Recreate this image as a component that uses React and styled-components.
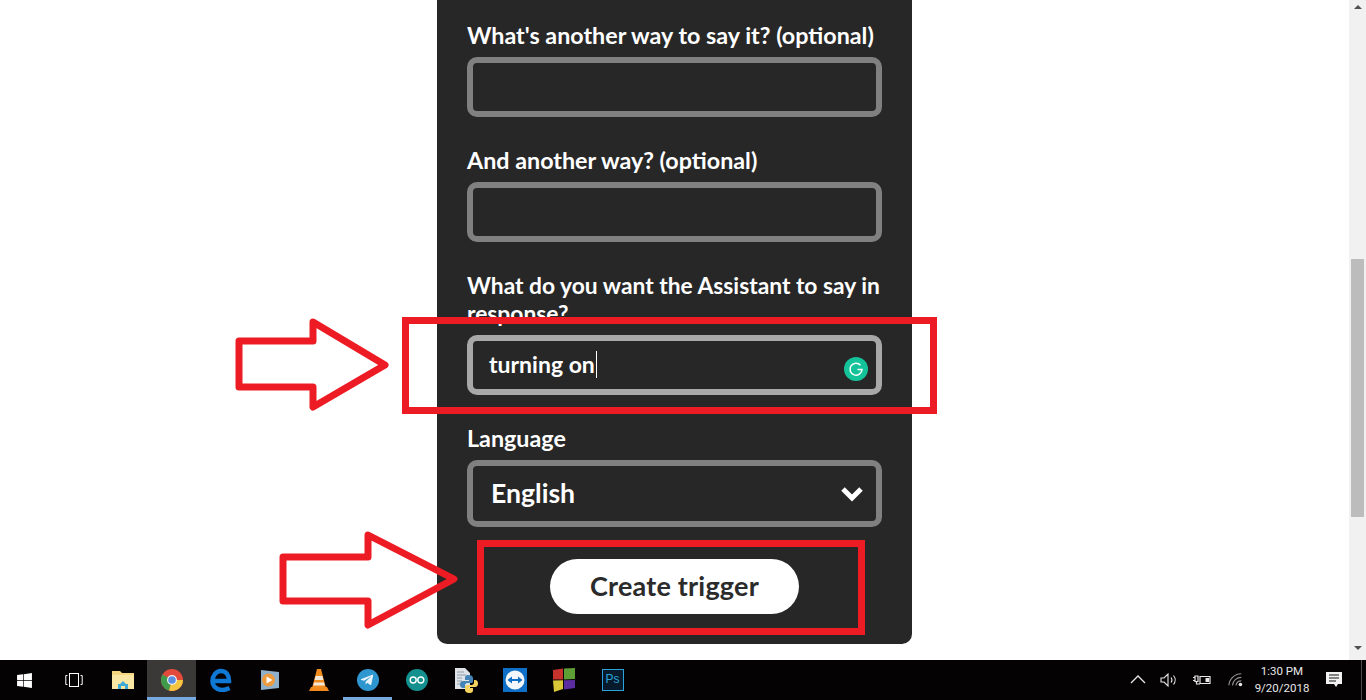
import React from 'react';
import styled, { createGlobalStyle } from 'styled-components';
import { FaWindows, FaTelegramPlane } from 'react-icons/fa';

const GlobalStyle = createGlobalStyle`
  html, body {
    margin: 0;
    padding: 0;
    height: 700px;
    overflow: hidden;
    background: #fff;
    font-family: 'Lato', 'Liberation Sans', sans-serif;
  }
`;

// Styles
const Screen = styled.div`
  display: flex;
  flex-direction: column;
  width: 1366px;
  height: 700px;
`;

const Browser = styled.div`
  display: flex;
  height: 660px;
`;

const Page = styled.main`
  position: relative;
  flex: 1;
  display: flex;
  justify-content: center;
  align-items: flex-start;
`;

const Panel = styled.form`
  width: 475px;
  box-sizing: border-box;
  padding: 21px 30px 30px;
  background: #272727;
  border-radius: 0 0 10px 10px;
  display: flex;
  flex-direction: column;
`;

const Label = styled.label`
  display: block;
  font-size: ${p => (p.$long ? 22.8 : 23.3)}px;
  line-height: 28px;
  font-weight: 700;
  color: #fff;
  margin-bottom: 8px;
`;

const Field = styled.div`
  box-sizing: border-box;
  height: ${p => (p.$tall ? 67 : 60)}px;
  border: 6px solid ${p => (p.$focus ? '#a8a8a8' : '#808080')};
  border-radius: 10px;
  margin-bottom: ${p => (p.$tall ? 32 : 29)}px;
  display: flex;
  align-items: center;
  justify-content: space-between;
  color: #fff;
  font-weight: 700;
`;

const TypedText = styled.span`
  font-size: 23px;
  line-height: 27px;
  margin-left: 16px;
  margin-bottom: 2px;
  padding-right: 1px;
  border-right: 1px solid #fff;
`;

const SelectText = styled.span`
  font-size: 26.6px;
  margin-left: 18px;
  margin-bottom: 2px;
`;

const Chevron = styled.svg`
  width: 24px;
  height: 16px;
  margin-right: 12px;
`;

const GrammarlyBadge = styled.svg`
  width: 24px;
  height: 24px;
  margin: 8px 8px 0 0;
`;

const CreateButton = styled.button`
  align-self: center;
  width: 249px;
  height: 55px;
  border: 0;
  border-radius: 28px;
  padding: 0 0 2px;
  background: #fff;
  color: #2b2b2b;
  font-family: inherit;
  font-size: 27px;
  font-weight: 700;
  letter-spacing: 0.2px;
`;

const RedBox = styled.div`
  position: absolute;
  left: ${p => p.$left}px;
  top: ${p => p.$top}px;
  width: ${p => p.$width}px;
  height: ${p => p.$height}px;
  box-sizing: border-box;
  border: ${p => p.$border}px solid #ed1c24;
`;

const Arrow = styled.svg`
  position: absolute;
  left: ${p => p.$left}px;
  top: ${p => p.$top}px;
`;

const Scrollbar = styled.div`
  width: 17px;
  background: #f1f1f1;
  display: flex;
  flex-direction: column;
  align-items: center;
`;

const ScrollArrow = styled.div`
  width: 0;
  height: 0;
  border-left: 4px solid transparent;
  border-right: 4px solid transparent;
  ${p => (p.$down ? 'border-top: 4px solid #505050;' : 'border-bottom: 4px solid #505050;')}
  margin-top: ${p => (p.$down ? 129 : 5)}px;
`;

const Thumb = styled.div`
  width: 13px;
  height: 258px;
  margin-top: 250px;
  background: #bcbcbc;
`;

const Taskbar = styled.footer`
  height: 40px;
  background: #050204;
  display: flex;
  align-items: stretch;
`;

const Slot = styled.div`
  width: 49px;
  box-sizing: border-box;
  flex: none;
  display: flex;
  align-items: center;
  justify-content: center;
  background: ${p => (p.$active ? '#3b3838' : 'transparent')};
  border-bottom: 3px solid ${p => (p.$active || p.$open ? '#76a9e0' : 'transparent')};
  border-top: 3px solid transparent;
`;

const Tray = styled.div`
  margin-left: auto;
  display: flex;
  align-items: center;
  color: #e8e8e8;
`;

const TrayIcon = styled.svg`
  width: ${p => p.$size || 18}px;
  height: 18px;
  margin-right: ${p => p.$gap}px;
`;

const Clock = styled.div`
  width: 58px;
  margin-right: 14px;
  text-align: center;
  font-family: 'Roboto', 'Liberation Sans', sans-serif;
  font-size: 11.5px;
  line-height: 17px;
  color: #e8e8e8;
`;

const PsTile = styled.div`
  box-sizing: border-box;
  width: 22px;
  height: 22px;
  border: 1.5px solid #2aa3dc;
  background: #061a2b;
  color: #2aa3dc;
  font-family: 'Liberation Sans', sans-serif;
  font-size: 12px;
  line-height: 19px;
  text-align: center;
`;

const ShowDesktop = styled.div`
  width: 1px;
  height: 40px;
  margin-left: 18px;
  margin-right: 4px;
  background: #4a4a4a;
`;

const TelegramDisc = styled.div`
  width: 22px;
  height: 22px;
  border-radius: 50%;
  background: #2f97cf;
  display: flex;
  align-items: center;
  justify-content: center;
  padding-right: 1px;
  box-sizing: border-box;
`;

// Drawn icons
const TaskView = () => (
  <svg width="18" height="16" viewBox="0 0 18 16" fill="none" stroke="#fff" strokeWidth="1">
    <rect x="4.5" y="1.5" width="9" height="13" />
    <path d="M2.5 3.5H.8v9h1.7M15.5 3.5h1.7v9h-1.7" />
  </svg>
);

const Folder = () => (
  <svg width="22" height="20" viewBox="0 0 22 20">
    <path d="M0 1h8l2 2h12v16H0z" fill="#f6d77f" />
    <rect x="0" y="5" width="22" height="14" fill="#fbe7a3" />
    <path d="M6 19v-5h2l3-3 3 3h2v5h-3v-3H9v3z" fill="#3fa9d6" />
  </svg>
);

const Chrome = () => (
  <svg width="22" height="22" viewBox="0 0 22 22">
    <circle cx="11" cy="11" r="11" fill="#e24a3b" />
    <path d="M11 11 1.5 5.5A11 11 0 0 0 8 21.6z" fill="#3f9b4a" />
    <path d="M11 11h11a11 11 0 0 1-14 10.6z" fill="#f4c63f" />
    <circle cx="11" cy="11" r="5" fill="#f2f2f2" />
    <circle cx="11" cy="11" r="3.8" fill="#5b8fe0" />
  </svg>
);

const Edge = () => (
  <svg width="22" height="24" viewBox="0 0 22 24" fill="none">
    <path d="M4 13h15c0-6-3-10-8-10S2.500 8 2.500 13s4 9 10 9c3 0 5-1 7-2" stroke="#0f78d4" strokeWidth="4.500" />
  </svg>
);

const MediaPlayer = () => (
  <svg width="20" height="22" viewBox="0 0 20 22">
    <path d="M1 1l18 2v16L1 21z" fill="#8fb0c8" />
    <circle cx="8.500" cy="11" r="6.500" fill="#ef9a3c" />
    <path d="M6.500 7.500l6 3.500-6 3.500z" fill="#fff" />
  </svg>
);

const Vlc = () => (
  <svg width="20" height="24" viewBox="0 0 20 24">
    <path d="M2 19h16l2 4H0z" fill="#f08a1d" />
    <path d="M8 1h4l5 19H3z" fill="#f28c1e" />
    <path d="M6.600 8h6.800l1 4H5.600zM5 14.500h10l.8 3H4.200z" fill="#f2e8da" />
  </svg>
);

const Arduino = () => (
  <svg width="22" height="22" viewBox="0 0 22 22" fill="none">
    <circle cx="11" cy="11" r="11" fill="#14908e" />
    <circle cx="7.200" cy="11" r="3" stroke="#fff" strokeWidth="1.400" />
    <circle cx="14.800" cy="11" r="3" stroke="#fff" strokeWidth="1.400" />
  </svg>
);

const PythonFile = () => (
  <svg width="24" height="26" viewBox="0 0 24 26">
    <path d="M1 1h10l5 5v16H1z" fill="#dfe3e8" />
    <path d="M3 5h7M3 8h9M3 11h5M3 14h5M3 17h4" stroke="#8d99a6" strokeWidth="1" />
    <svg x="6" y="8" width="18" height="18" viewBox="0 0 18 18">
      <path d="M9 0C5 0 5 2 5 3v2h4v1H3C1 6 0 7.500 0 9.500S1 13 3 13h2v-2.500C5 9 6 8 7.500 8h4C13 8 13 7 13 6V3c0-2-2-3-4-3z" fill="#4584b6" />
      <path d="M9 18c4 0 4-2 4-3v-2H9v-1h6c2 0 3-1.500 3-3.500S17 5 15 5h-1v2.500C14 9 13 10 11.500 10h-4C6 10 5 11 5 12v3c0 2 2 3 4 3z" fill="#f4d35e" />
    </svg>
  </svg>
);

const TeamViewer = () => (
  <svg width="24" height="24" viewBox="0 0 24 24">
    <rect width="24" height="24" fill="#0f6fc6" />
    <circle cx="12" cy="12" r="9.500" fill="#f3f7fb" />
    <path d="M4.500 12l4.500-3.500V11h6V8.500l4.500 3.500-4.500 3.500V13H9v2.500z" fill="#0f6fc6" />
  </svg>
);

const Tiles = () => (
  <svg width="22" height="24" viewBox="0 0 22 24">
    <path d="M0 2l10-1.500v11L0 11.500z" fill="#c8322c" />
    <path d="M11 .5L22 0v11l-11 .5z" fill="#5d9e35" />
    <path d="M0 12.500l10-.2V21L1 24z" fill="#d8c736" />
    <path d="M11 12.300l11-.3v8l-11 1.500z" fill="#5a2ca0" />
  </svg>
);

// Data
const fields = [
  { label: "What's another way to say it? (optional)" },
  { label: 'And another way? (optional)' }
];

const App = () => (
  <Screen>
    <GlobalStyle />
    <Browser>
      <Page>
        <Panel>
          {fields.map(({ label }) => (
            <div key={label}>
              <Label>{label}</Label>
              <Field />
            </div>
          ))}
          <Label $long>What do you want the Assistant to say in response?</Label>
          <Field $focus>
            <TypedText>turning on</TypedText>
            <GrammarlyBadge viewBox="0 0 24 24" fill="none">
              <circle cx="12" cy="12" r="12" fill="#15c39a" />
              <path d="M16.500 8.200A6 6 0 1 0 18 12.500h-4.500" stroke="#fff" strokeWidth="1.500" />
            </GrammarlyBadge>
          </Field>
          <Label>Language</Label>
          <Field $tall>
            <SelectText>English</SelectText>
            <Chevron viewBox="0 0 24 16" fill="none">
              <path d="M3 3l9 9 9-9" stroke="#fff" strokeWidth="5" />
            </Chevron>
          </Field>
          <CreateButton type="button">Create trigger</CreateButton>
        </Panel>
        <RedBox $left={402} $top={317} $width={535} $height={97} $border={7} />
        <RedBox $left={477} $top={540} $width={388} $height={95} $border={7} />
        <Arrow $left={234} $top={316} width="156" height="96" viewBox="0 0 156 96" fill="none">
          <path d="M5 25H79V6L151 49 79 91V71H5z" stroke="#ed1c24" strokeWidth="7" strokeLinejoin="round" />
        </Arrow>
        <Arrow $left={278} $top={529} width="182" height="102" viewBox="0 0 182 102" fill="none">
          <path d="M5 28H90V6L176 50 90 96V72H5z" stroke="#ed1c24" strokeWidth="7" strokeLinejoin="round" />
        </Arrow>
      </Page>
      <Scrollbar>
        <ScrollArrow />
        <Thumb />
        <ScrollArrow $down />
      </Scrollbar>
    </Browser>
    <Taskbar>
      <Slot><FaWindows size={17} color="#fff" /></Slot>
      <Slot><TaskView /></Slot>
      <Slot><Folder /></Slot>
      <Slot $active><Chrome /></Slot>
      <Slot><Edge /></Slot>
      <Slot><MediaPlayer /></Slot>
      <Slot><Vlc /></Slot>
      <Slot $open><TelegramDisc><FaTelegramPlane size={14} color="#e8f4fb" /></TelegramDisc></Slot>
      <Slot><Arduino /></Slot>
      <Slot><PythonFile /></Slot>
      <Slot><TeamViewer /></Slot>
      <Slot><Tiles /></Slot>
      <Slot><PsTile>Ps</PsTile></Slot>
      <Tray>
        <TrayIcon $gap={13} viewBox="0 0 18 18" fill="none" stroke="currentColor" strokeWidth="1.300">
          <path d="M2 12l7-7 7 7" />
        </TrayIcon>
        <TrayIcon $gap={15} viewBox="0 0 18 18" fill="none" stroke="currentColor" strokeWidth="1.100">
          <path d="M1 7h3l4-4v12l-4-4H1zM11 6.500a4 4 0 0 1 0 5M13.500 4.500a7 7 0 0 1 0 9" />
        </TrayIcon>
        <TrayIcon $gap={17} viewBox="0 0 18 18" fill="none" stroke="currentColor" strokeWidth="1.200">
          <path d="M7 5.500h10v7H7zM0 6.500h2M0 9.500h2M2 5h3v5.500H2zM3.500 10.500V13H7" />
          <rect x="12.500" y="7" width="3.500" height="4" fill="currentColor" stroke="none" />
        </TrayIcon>
        <TrayIcon $gap={9} $size={16} viewBox="0 0 18 18" fill="none" stroke="#8f8f8f" strokeWidth="1.300">
          <path d="M1 15A14 14 0 0 1 15 2M5 15A10 10 0 0 1 15 6M9 15a6 6 0 0 1 6-5" />
          <circle cx="14" cy="14" r="2" fill="#e8e8e8" stroke="none" />
        </TrayIcon>
        <Clock>
          <div>1:30 PM</div>
          <div>9/20/2018</div>
        </Clock>
        <TrayIcon $gap={0} viewBox="0 0 18 18">
          <path d="M1 1h16v12h-4l-2 3-2-3H1z" fill="#f2f2f2" />
          <path d="M4 4h10M4 7h10M4 10h7" stroke="#111" strokeWidth="1" />
        </TrayIcon>
        <ShowDesktop />
      </Tray>
    </Taskbar>
  </Screen>
);

export default App;
